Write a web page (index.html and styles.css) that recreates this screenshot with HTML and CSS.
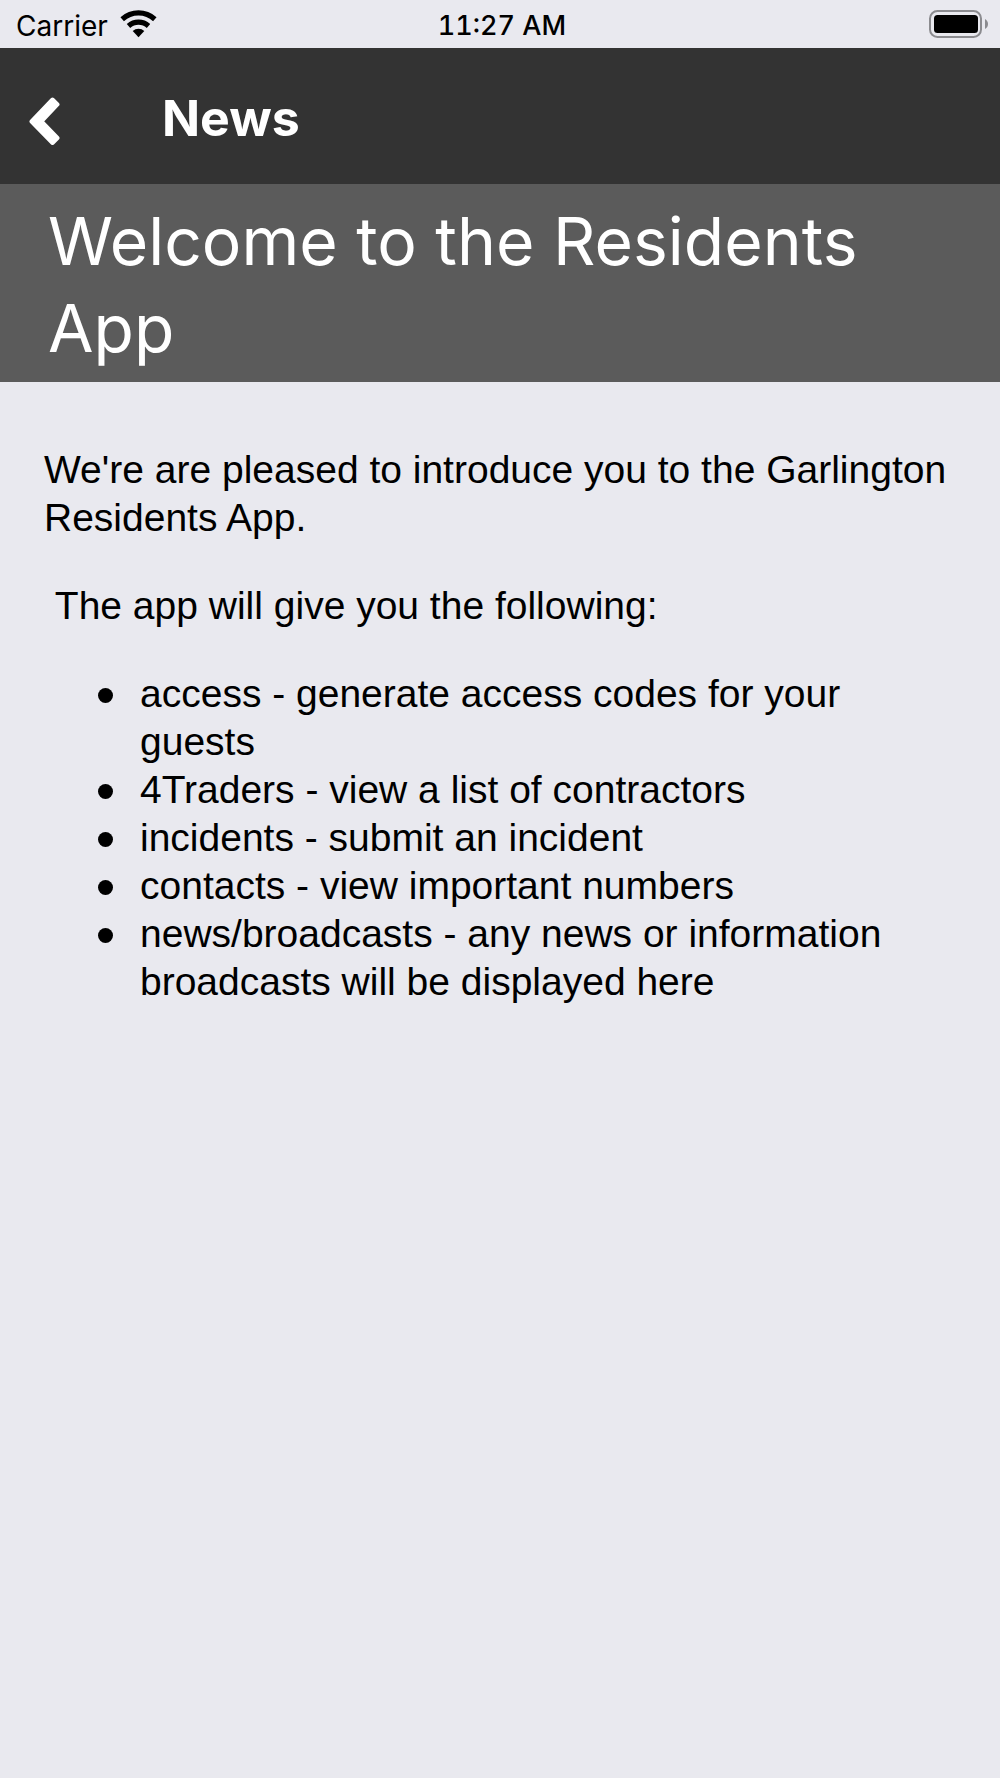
FILE: index.html
```html
<!DOCTYPE html>
<html lang="en">
<head>
<meta charset="utf-8">
<meta name="viewport" content="width=device-width, initial-scale=1">
<title>News</title>
<link rel="stylesheet" href="styles.css">
</head>
<body>
<div class="status">
  <div class="status-left"><span class="carrier">Carrier</span>
    <svg class="wifi" viewBox="0 0 37 28" aria-hidden="true"><path d="M2.200 9.200a24.300 24.300 0 0 1 32.600 0M8.500 16a15 15 0 0 1 20 0" fill="none" stroke="#000" stroke-width="5.200"/><path d="M18.500 27.200L12.700 21a8.700 8.700 0 0 1 11.600 0z"/></svg>
  </div>
  <time class="clock">11:27 AM</time>
  <svg class="battery" viewBox="0 0 59 28" aria-hidden="true"><rect x="1" y="1" width="51" height="26" rx="7.500" fill="none" stroke="#8b8b8f" stroke-width="2"/><rect x="5" y="5" width="44" height="18" rx="3.500"/><path d="M56 9c4 2 4 8 0 10z" fill="#8b8b8f"/></svg>
</div>
<header class="bar">
  <button class="back" type="button" aria-label="Back"><svg viewBox="0 0 32 54" aria-hidden="true"><path d="M24.500 8.500L3.500 30.500l21 21.500 5-5L13.500 30.500l16-17z" fill="#fff" stroke="#fff" stroke-width="4" stroke-linejoin="round"/></svg></button>
  <h1 class="title">News</h1>
</header>
<main>
  <h2 class="headline">Welcome to the Residents App</h2>
  <article class="content">
    <p>We're are pleased to introduce you to the Garlington Residents App.</p>
    <p>&nbsp;The app will give you the following:</p>
    <ul>
      <li>access - generate access codes for your guests</li>
      <li>4Traders - view a list of contractors</li>
      <li>incidents - submit an incident</li>
      <li>contacts - view important numbers</li>
      <li>news/broadcasts - any news or information broadcasts will be displayed here</li>
    </ul>
  </article>
</main>
</body>
</html>
```
FILE: styles.css
```css
* { box-sizing: border-box; }
body {
  margin: 0;
  min-height: 100vh;
  background: #e9e9ef;
  color: #000;
  font-family: "Liberation Sans", Arial, sans-serif;
}
.status {
  display: grid;
  grid-template-columns: 1fr auto 1fr;
  align-items: center;
  height: 48px;
  padding: 0 12px 0 16px;
  font: 28px/40px Inter, sans-serif;
}
.status-left { display: flex; align-items: center; gap: 12px; }
.wifi { width: 37px; height: 28px; }
.carrier, .clock { padding-top: 3px; }
.clock { font-size: 27px; font-weight: 500; font-variant-numeric: tabular-nums; }
.battery { width: 59px; height: 28px; justify-self: end; }
.bar {
  display: flex;
  align-items: center;
  height: 136px;
  padding: 4px 28px 0;
  background: #333;
  color: #fff;
}
.back { display: flex; width: 134px; padding: 0; border: 0; background: none; }
.back svg { width: 32px; height: 54px; }
.title { margin: 0; font: 700 50px/64px Inter, sans-serif; }
.headline {
  margin: 0;
  padding: 14px 48px 10px;
  background: #5b5b5b;
  color: #fff;
  font: 400 66px/87px Inter, sans-serif;
}
.content { padding: 64px 44px; font-size: 39px; line-height: 48px; }
.content p { margin: 0 0 40px; }
.content ul { margin: 0; padding: 0 0 0 54px; list-style: none; }
.content li { display: flex; gap: 27px; }
.content li::before {
  content: "";
  flex: none;
  width: 15px;
  height: 15px;
  margin-top: 18px;
  border-radius: 50%;
  background: #000;
}
```
